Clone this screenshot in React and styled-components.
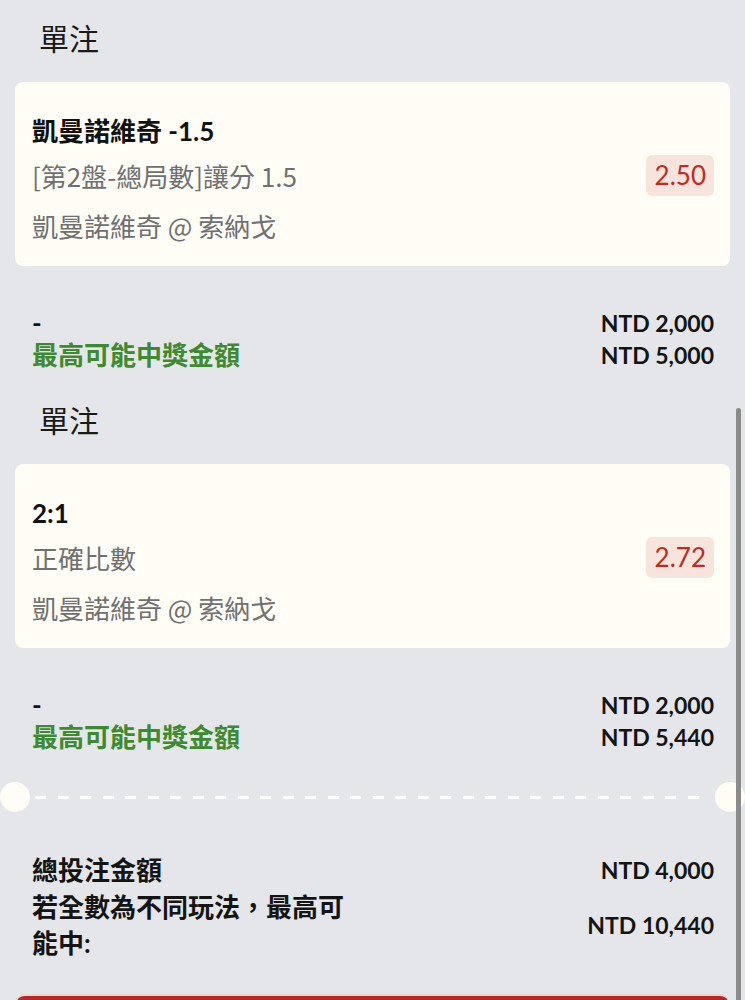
import React from "react";
import styled, { createGlobalStyle } from "styled-components";

const GlobalStyle = createGlobalStyle`
  html, body {
    margin: 0;
    padding: 0;
    height: 100%;
    overflow: hidden;
    background: #e5e6e9;
  }
  body {
    font-family: Lato, "Noto Sans CJK TC", sans-serif;
    color: #141414;
  }
`

const Page = styled.div`
  position: relative;
  padding: 0 15px;
  height: 1000px;
  overflow: hidden;
`
const Section = styled.section`
  display: flex;
  flex-direction: column;
  padding-bottom: 11px;
`
const Heading = styled.div`
  padding: 17px 0 0 24px;
  margin-bottom: 25px;
  font-size: 30px;
  line-height: 40px;
  font-family: "Noto Sans CJK TC", sans-serif;
  color: #1a1a1a;
`
const Card = styled.div`
  display: flex;
  align-items: center;
  justify-content: space-between;
  background: #fffdf5;
  border-radius: 8px;
  padding: 33px 16px 24px 17px;
  margin-bottom: 41px;
`
const Info = styled.div`
  display: flex;
  flex-direction: column;
`
const Title = styled.div`
  font-weight: 700;
  font-size: 26px;
  line-height: 32px;
  color: #111;
`
const Sub = styled.div`
  font-family: "Noto Sans CJK TC", sans-serif;
  font-size: 26px;
  line-height: 32px;
  color: #707070;
  margin-top: ${p => p.$gap}px;
`
const Odds = styled.div`
  background: #f7e4dd;
  color: #bf2a25;
  font-size: 26px;
  line-height: 41px;
  padding: 0 8px 0 9px;
  border-radius: 6px;
  margin-top: -7px;
`
const Row = styled.div`
  display: flex;
  justify-content: space-between;
  align-items: center;
  padding: 0 16px 0 17px;
  line-height: 32px;
  font-weight: 700;
`
const Label = styled.span`
  font-size: 26px;
  color: ${p => p.$green ? "#3d8a30" : "#141414"};
`
const Amount = styled.span`
  font-size: 23px;
  color: #141414;
`
const Divider = styled.div`
  display: flex;
  align-items: center;
  margin: 18px -15px 0;
  height: 30px;
`
const Hole = styled.div`
  width: 30px;
  height: 30px;
  border-radius: 50%;
  background: #fffdf5;
  flex: none;
`
const Dashes = styled.div`
  flex: 1;
  height: 3px;
  margin: 0 5px;
  background: repeating-linear-gradient(to right, #fff 0 11px, transparent 11px 22.5px);
`
const Totals = styled.div`
  display: flex;
  flex-direction: column;
  margin-top: 41px;
`
const TotalRow = styled(Row)`
  line-height: ${p => p.$lh}px;
  margin-top: ${p => p.$gap || 0}px;
`
const WrapLabel = styled(Label)`
  max-width: 325px;
`
const SubmitBar = styled.div`
  margin: 33px 2px 0;
  height: 60px;
  background: #b1292a;
  border-top: 2px solid #f1d6c8;
  border-radius: 8px 8px 0 0;
`
const Scrollbar = styled.div`
  position: absolute;
  right: 4px;
  top: 408px;
  width: 5px;
  height: 620px;
  border-radius: 3px;
  background: #8b8b8b;
`

const bets = [
  {
    title: "凱曼諾維奇 -1.5",
    market: "[第2盤-總局數]讓分 1.5",
    event: "凱曼諾維奇 @ 索納戈",
    odds: "2.50",
    stake: "NTD 2,000",
    win: "NTD 5,000",
  },
  {
    title: "2:1",
    market: "正確比數",
    event: "凱曼諾維奇 @ 索納戈",
    odds: "2.72",
    stake: "NTD 2,000",
    win: "NTD 5,440",
  },
]

function BetSection({ bet }) {
  return (
    <Section>
      <Heading>單注</Heading>
      <Card>
        <Info>
          <Title>{bet.title}</Title>
          <Sub $gap={13}>{bet.market}</Sub>
          <Sub $gap={18}>{bet.event}</Sub>
        </Info>
        <Odds>{bet.odds}</Odds>
      </Card>
      <Row>
        <Label>-</Label>
        <Amount>{bet.stake}</Amount>
      </Row>
      <Row>
        <Label $green>最高可能中獎金額</Label>
        <Amount>{bet.win}</Amount>
      </Row>
    </Section>
  )
}

export default function App() {
  return (
    <Page>
      <GlobalStyle />
      {bets.map((b, i) => <BetSection key={i} bet={b} />)}
      <Divider>
        <Hole />
        <Dashes />
        <Hole />
      </Divider>
      <Totals>
        <TotalRow $lh={34}>
          <Label>總投注金額</Label>
          <Amount>NTD 4,000</Amount>
        </TotalRow>
        <TotalRow $lh={36} $gap={2}>
          <WrapLabel>若全數為不同玩法，最高可能中:</WrapLabel>
          <Amount>NTD 10,440</Amount>
        </TotalRow>
      </Totals>
      <SubmitBar />
      <Scrollbar />
    </Page>
  )
}
